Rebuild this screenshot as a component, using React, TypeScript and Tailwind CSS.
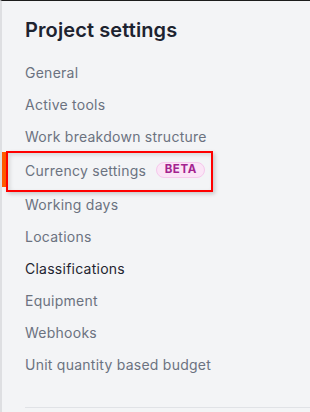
import React from "react";

const items = [
  "General",
  "Active tools",
  "Work breakdown structure",
  "Currency settings",
  "Working days",
  "Locations",
  "Classifications",
  "Equipment",
  "Webhooks",
  "Unit quantity based budget",
];

export default function App() {
  return (
    <div
      className="w-[310px] h-[412px] overflow-hidden bg-[#f3f4f6] border-t border-t-[#1c1c1c] border-l-2 border-l-[#dedfe2]"
      style={{ fontFamily: "Inter, 'Noto Sans', sans-serif" }}
    >
      <h1 className="pl-[23px] pt-[15px] text-[20px] leading-[28px] font-semibold tracking-[0.1px] text-[#1d2330]">
        Project settings
      </h1>
      <ul className="mt-[13px]">
        {items.map((label) => {
          const currency = label === "Currency settings";
          const active = label === "Classifications";
          return (
            <li
              key={label}
              className={`relative flex items-center pl-[23px] text-[14px] leading-[20px] tracking-[0.25px] ${
                currency ? "h-9" : "h-8"
              } ${active ? "text-[#1f2430]" : "text-[#6b7280]"}`}
            >
              {currency && (
                <>
                  <span className="absolute left-[-2px] top-[-1px] h-[35px] w-[6px] bg-[#ff5a00]" />
                  <span className="absolute left-[4px] top-[-2px] w-[207px] h-[41px] border-2 border-[#ff0000] shadow-[2px_2px_4px_rgba(0,0,0,0.18),inset_2px_2px_4px_rgba(0,0,0,0.12)]" />
                </>
              )}
              <span>{label}</span>
              {currency && (
                <span className="ml-[10px] mb-[3px] inline-flex items-center justify-center h-4 w-[49px] rounded-full border border-[#f6c8ec] bg-[#fbe5f6] text-[11.5px] leading-none font-bold tracking-[0.6px] text-[#a3238f]">
                  BETA
                </span>
              )}
            </li>
          );
        })}
      </ul>
      <div className="ml-[23px] mt-[26px] h-px bg-[#e0e2e6]" />
    </div>
  );
}
